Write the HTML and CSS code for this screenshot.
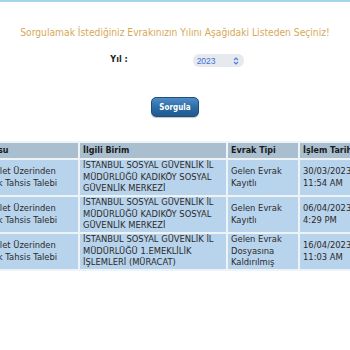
FILE: index.html
```html
<!DOCTYPE html>
<html lang="tr">
<head>
<meta charset="utf-8">
<link rel="stylesheet" href="styles.css">
</head>
<body>
<div class="topbar"></div>
<h1 class="title">Sorgulamak İstediğiniz Evrakınızın Yılını Aşağıdaki Listeden Seçiniz!</h1>
<div class="form-row">
  <span class="label">Yıl :</span>
  <div class="select">
    <span class="select-val">2023</span>
    <svg class="chev" width="6" height="8" viewBox="0 0 6 8"><path d="M1 3 L3 1 L5 3 M1 5 L3 7 L5 5" fill="none" stroke="#4a7ad8" stroke-width="1.1"/></svg>
  </div>
</div>
<div class="btn-row"><button class="btn">Sorgula</button></div>
<div class="table-wrap">
<table class="grid">
  <colgroup><col class="c1"><col class="c2"><col class="c3"><col class="c4"></colgroup>
  <thead>
    <tr><th>Konusu</th><th>İlgili Birim</th><th>Evrak Tipi</th><th>İşlem Tarihi</th></tr>
  </thead>
  <tbody>
    <tr><td>E-Devlet Üzerinden<br>Yaşlılık Tahsis Talebi</td><td>İSTANBUL SOSYAL GÜVENLİK İL MÜDÜRLÜĞÜ KADIKÖY SOSYAL GÜVENLİK MERKEZİ</td><td>Gelen Evrak Kayıtlı</td><td>30/03/2023<br>11:54 AM</td></tr>
    <tr><td>E-Devlet Üzerinden<br>Yaşlılık Tahsis Talebi</td><td>İSTANBUL SOSYAL GÜVENLİK İL MÜDÜRLÜĞÜ KADIKÖY SOSYAL GÜVENLİK MERKEZİ</td><td>Gelen Evrak Kayıtlı</td><td>06/04/2023<br>4:29 PM</td></tr>
    <tr><td>E-Devlet Üzerinden<br>Yaşlılık Tahsis Talebi</td><td>İSTANBUL SOSYAL GÜVENLİK İL MÜDÜRLÜĞÜ 1.EMEKLİLİK İŞLEMLERİ (MÜRACAT)</td><td>Gelen Evrak Dosyasına Kaldırılmış</td><td>16/04/2023<br>11:03 AM</td></tr>
  </tbody>
</table>
</div>
</body>
</html>
```
FILE: styles.css
```css
html, body { margin: 0; padding: 0; background: #fff; }
body { width: 350px; height: 350px; overflow: hidden; font-family: "DejaVu Sans", Verdana, sans-serif; }
.topbar { height: 2px; background: #a3d4ec; }
.title {
  margin: 25px 0 0; text-align: center; font-weight: normal;
  font-family: "DejaVu Sans Condensed", "DejaVu Sans", sans-serif;
  font-size: 10.2px; line-height: 12px; color: #d5a95a; white-space: nowrap;
}
.form-row { display: flex; justify-content: center; align-items: center; gap: 65px; margin-top: 15px; padding-left: 4px; }
.label { font-size: 8px; font-weight: bold; color: #222; margin-top: -3px; }
.select {
  width: 51px; height: 13px; box-sizing: border-box; border-radius: 6px; background: #e6e9ee;
  display: flex; align-items: center; justify-content: space-between; padding: 0 5px 0 4px;
  font-family: "Liberation Sans", Arial, sans-serif;
}
.select-val { font-size: 8.5px; color: #3e6fd6; }
.btn-row { display: flex; justify-content: center; margin-top: 30px; }
.btn {
  width: 48px; height: 20px; border: 1px solid #1f4f80; border-radius: 5px;
  background: linear-gradient(#4d8cc4, #2b6aa3 55%, #205a90);
  color: #fff; font-weight: bold; font-size: 8px; font-family: "DejaVu Sans Condensed", "DejaVu Sans", sans-serif;
  padding: 0; box-shadow: 0 1px 1px rgba(0,0,0,0.25);
}
.table-wrap { display: flex; justify-content: center; margin-top: 24px; }
.grid { flex: none; width: 410px; border-collapse: separate; border-spacing: 2px; table-layout: fixed; background: #eef3f8; font-size: 8.4px; }
.c1 { width: 106px; } .c2 { width: 146px; } .c3 { width: 70px; } .c4 { width: 78px; }
.grid th { background: #a9bfd0; color: #1a1a1a; text-align: left; font-weight: bold; font-size: 8px; height: 15px; padding: 0 3px; line-height: 13px; }
.grid td { background: #b8d3ec; color: #2a2a2a; padding: 0 3px; line-height: 11.6px; height: 35px; vertical-align: middle; }
```
